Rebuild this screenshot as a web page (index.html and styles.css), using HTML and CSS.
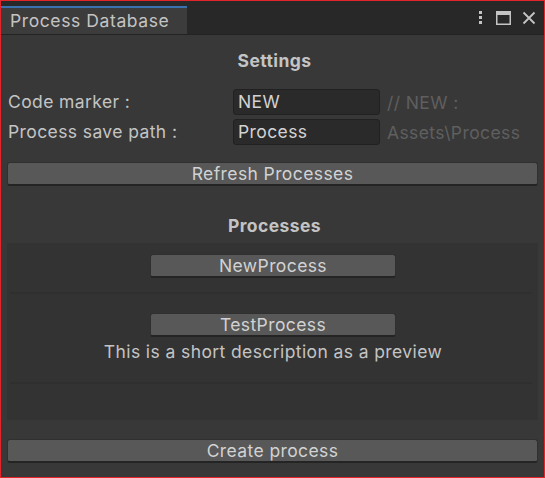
FILE: index.html
```html
<!DOCTYPE html>
<html>
<head>
<meta charset="utf-8">
<link rel="stylesheet" href="styles.css">
</head>
<body>
<div class="window">
  <div class="tabbar">
    <div class="tab">Process Database</div>
    <div class="tab-icons">
      <svg width="8" height="14" viewBox="0 0 8 14"><rect x="2" y="0" width="3" height="3" fill="#c4c4c4"/><rect x="2" y="5" width="3" height="3" fill="#c4c4c4"/><rect x="2" y="10" width="3" height="3" fill="#c4c4c4"/></svg>
      <svg width="15" height="14" viewBox="0 0 15 14"><rect x="0.75" y="0.75" width="13.5" height="12.5" fill="none" stroke="#c4c4c4" stroke-width="1.5"/><rect x="0" y="0" width="15" height="4" fill="#c4c4c4"/></svg>
      <svg width="14" height="14" viewBox="0 0 14 14"><path d="M1.5 1.5 L12.5 12.5 M12.5 1.5 L1.5 12.5" stroke="#c4c4c4" stroke-width="1.8" fill="none"/></svg>
    </div>
  </div>
  <div class="content">
    <div class="heading h-settings">Settings</div>
    <div class="fields">
      <div class="label">Code marker :</div>
      <div class="input">NEW</div>
      <div class="hint">// NEW :</div>
      <div class="label">Process save path :</div>
      <div class="input">Process</div>
      <div class="hint">Assets\Process</div>
    </div>
    <div class="btn btn-wide btn-refresh">Refresh Processes</div>
    <div class="heading h-processes">Processes</div>
    <div class="list">
      <div class="item item-1">
        <div class="btn btn-item">NewProcess</div>
      </div>
      <div class="sep"></div>
      <div class="item item-2">
        <div class="btn btn-item">TestProcess</div>
        <div class="desc">This is a short description as a preview</div>
      </div>
      <div class="sep"></div>
    </div>
    <div class="btn btn-wide btn-create">Create process</div>
  </div>
</div>
</body>
</html>
```
FILE: styles.css
```css
html, body {
  margin: 0;
  padding: 0;
  background: #383838;
}
body {
  font-family: Inter, "Noto Sans", sans-serif;
  font-size: 17.5px;
  letter-spacing: 0.4px;
  color: #c4c4c4;
}
.window {
  width: 545px;
  height: 478px;
  box-sizing: border-box;
  border: 1px solid #e3242b;
  background: #383838;
  display: flex;
  flex-direction: column;
  overflow: hidden;
}
.tabbar {
  height: 33px;
  background: #282828;
  border-bottom: 1px solid #232323;
  display: flex;
  align-items: flex-end;
  flex-shrink: 0;
}
.tab {
  width: 186px;
  height: 28px;
  box-sizing: border-box;
  background: #3c3c3c;
  border-top: 2px solid #3a72b0;
  padding-left: 9px;
  line-height: 26px;
  font-size: 17.5px;
  letter-spacing: 0.6px;
  color: #c4c4c4;
}
.tab-icons {
  margin-left: auto;
  display: flex;
  align-items: center;
  gap: 11px;
  padding-right: 8px;
  align-self: center;
}
.content {
  padding: 0 2px 0 6px;
  display: flex;
  flex-direction: column;
}
.heading {
  text-align: center;
  font-weight: 700;
  line-height: 20px;
  height: 20px;
}
.h-settings { margin-top: 16px; }
.fields {
  margin-top: 18px;
  display: grid;
  grid-template-columns: 219px 147px auto;
  column-gap: 7px;
  row-gap: 4px;
  align-items: center;
}
.label {
  padding-left: 1px;
  line-height: 26px;
}
.input {
  height: 26px;
  box-sizing: border-box;
  background: #2a2a2a;
  border: 1px solid #212121;
  border-radius: 3px;
  padding-left: 4px;
  line-height: 24px;
  color: #d2d2d2;
}
.hint {
  color: #5f5f5f;
}
.btn {
  height: 24px;
  box-sizing: border-box;
  background: #585858;
  border: 1px solid #303030;
  border-bottom: 2px solid #242424;
  border-radius: 3px;
  text-align: center;
  line-height: 21px;
  color: #d2d2d2;
}
.btn-wide {
  width: 531px;
}
.btn-refresh { margin-top: 17px; }
.h-processes { margin-top: 30px; }
.list {
  margin-top: 7px;
  width: 531px;
  height: 177px;
  background: #333333;
  display: flex;
  flex-direction: column;
}
.item {
  display: flex;
  flex-direction: column;
  align-items: center;
  box-sizing: border-box;
  padding-left: 1px;
}
.item-1 {
  height: 49px;
  padding-top: 11px;
}
.item-2 {
  height: 88px;
  padding-top: 19px;
}
.sep {
  height: 2px;
  background: #2f2f2f;
  margin: 0 6px 0 3px;
}
.btn-item {
  width: 246px;
}
.desc {
  margin-top: 5px;
  line-height: 20px;
}
.btn-create { margin-top: 19px; }
```
